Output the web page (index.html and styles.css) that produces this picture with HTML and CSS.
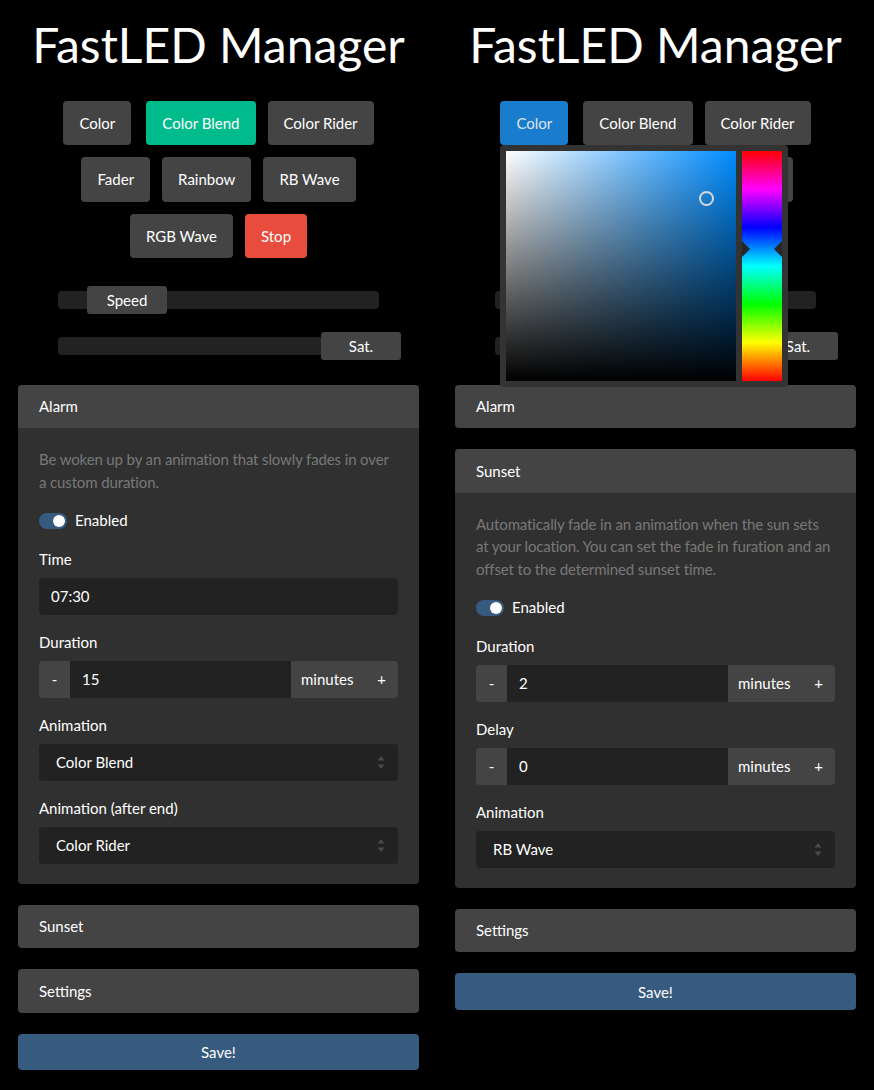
FILE: index.html
```html
<!DOCTYPE html>
<html>
<head>
<meta charset="utf-8">
<title>FastLED Manager</title>
<link rel="stylesheet" href="styles.css">
</head>
<body>
<div class="page">
  <!-- LEFT COLUMN -->
  <div class="col">
    <h1 class="title">FastLED Manager</h1>
    <div class="rows">
      <div class="row">
        <span class="btn-wrap first"><button class="btn">Color</button></span>
        <button class="btn btn-success">Color Blend</button>
        <button class="btn">Color Rider</button>
      </div>
      <div class="row">
        <button class="btn">Fader</button>
        <button class="btn">Rainbow</button>
        <button class="btn">RB Wave</button>
      </div>
      <div class="row">
        <button class="btn">RGB Wave</button>
        <button class="btn btn-danger">Stop</button>
      </div>
    </div>
    <div class="sliders">
      <div class="slider"><div class="track"></div><div class="thumb" style="left:29px">Speed</div></div>
      <div class="slider"><div class="track"></div><div class="thumb" style="left:263px">Sat.</div></div>
    </div>

    <div class="card">
      <div class="card-header">Alarm</div>
      <div class="card-body">
        <p class="muted">Be woken up by an animation that slowly fades in over a custom duration.</p>
        <div class="switch-row"><span class="switch"><span class="knob"></span></span><span>Enabled</span></div>
        <div class="group">
          <div class="label">Time</div>
          <div class="input">07:30</div>
        </div>
        <div class="group">
          <div class="label">Duration</div>
          <div class="igroup">
            <span class="ig-btn">-</span>
            <span class="ig-input">15</span>
            <span class="ig-text">minutes</span>
            <span class="ig-btn plus">+</span>
          </div>
        </div>
        <div class="group">
          <div class="label">Animation</div>
          <div class="select"><span>Color Blend</span><svg class="arrows" width="8" height="13" viewBox="0 0 8 13"><path d="M4 0 L7.5 4.5 L0.5 4.5 Z M0.5 8.5 L7.5 8.5 L4 13 Z" fill="#4a4a4a"/></svg></div>
        </div>
        <div class="group">
          <div class="label">Animation (after end)</div>
          <div class="select"><span>Color Rider</span><svg class="arrows" width="8" height="13" viewBox="0 0 8 13"><path d="M4 0 L7.5 4.5 L0.5 4.5 Z M0.5 8.5 L7.5 8.5 L4 13 Z" fill="#4a4a4a"/></svg></div>
        </div>
      </div>
    </div>
    <div class="card"><div class="card-header">Sunset</div></div>
    <div class="card"><div class="card-header">Settings</div></div>
    <button class="save">Save!</button>
  </div>

  <!-- RIGHT COLUMN -->
  <div class="col">
    <h1 class="title">FastLED Manager</h1>
    <div class="rows">
      <div class="row">
        <span class="btn-wrap first">
          <button class="btn btn-picked">Color</button>
          <div class="picker">
            <div class="sv">
              <span class="sv-dot"></span>
            </div>
            <div class="hue">
              <svg class="hue-mark" width="40" height="16" viewBox="0 0 40 16"><path d="M0 0 L8 8 L0 16 Z M40 0 L32 8 L40 16 Z" fill="#262626"/></svg>
            </div>
          </div>
        </span>
        <button class="btn">Color Blend</button>
        <button class="btn">Color Rider</button>
      </div>
      <div class="row">
        <button class="btn">Fader</button>
        <button class="btn">Rainbow</button>
        <button class="btn">RB Wave</button>
      </div>
      <div class="row">
        <button class="btn">RGB Wave</button>
        <button class="btn btn-danger">Stop</button>
      </div>
    </div>
    <div class="sliders">
      <div class="slider"><div class="track"></div><div class="thumb" style="left:29px">Speed</div></div>
      <div class="slider"><div class="track"></div><div class="thumb" style="left:263px">Sat.</div></div>
    </div>

    <div class="card"><div class="card-header">Alarm</div></div>
    <div class="card">
      <div class="card-header">Sunset</div>
      <div class="card-body">
        <p class="muted">Automatically fade in an animation when the sun sets at your location. You can set the fade in furation and an offset to the determined sunset time.</p>
        <div class="switch-row"><span class="switch"><span class="knob"></span></span><span>Enabled</span></div>
        <div class="group">
          <div class="label">Duration</div>
          <div class="igroup">
            <span class="ig-btn">-</span>
            <span class="ig-input">2</span>
            <span class="ig-text">minutes</span>
            <span class="ig-btn plus">+</span>
          </div>
        </div>
        <div class="group">
          <div class="label">Delay</div>
          <div class="igroup">
            <span class="ig-btn">-</span>
            <span class="ig-input">0</span>
            <span class="ig-text">minutes</span>
            <span class="ig-btn plus">+</span>
          </div>
        </div>
        <div class="group">
          <div class="label">Animation</div>
          <div class="select"><span>RB Wave</span><svg class="arrows" width="8" height="13" viewBox="0 0 8 13"><path d="M4 0 L7.5 4.5 L0.5 4.5 Z M0.5 8.5 L7.5 8.5 L4 13 Z" fill="#4a4a4a"/></svg></div>
        </div>
      </div>
    </div>
    <div class="card"><div class="card-header">Settings</div></div>
    <button class="save">Save!</button>
  </div>
</div>
</body>
</html>
```
FILE: styles.css
```css
html, body {
  margin: 0;
  padding: 0;
  background: #000;
}
body {
  font-family: Lato, "Open Sans", sans-serif;
  font-size: 15px;
  line-height: 22.5px;
  color: #fff;
}
.page {
  display: flex;
}
.col {
  width: 437px;
  box-sizing: border-box;
  padding: 0 18px;
  position: relative;
}
.title {
  margin: 16px 0 0;
  font-size: 48px;
  font-weight: 400;
  line-height: 1.2;
  text-align: center;
  color: #fff;
}
.rows {
  margin-top: 27.4px;
  display: flex;
  flex-direction: column;
  gap: 12px;
}
.row {
  display: flex;
  justify-content: center;
  gap: 12px;
}
.btn-wrap {
  position: relative;
  display: flex;
}
.btn-wrap.first {
  margin-right: 3px;
}
.btn {
  font-family: inherit;
  font-size: 15px;
  line-height: 22.5px;
  padding: 11px 16px;
  border: none;
  border-radius: 4px;
  background: #444;
  color: #fff;
  margin: 0;
}
.btn-success { background: #00bc8c; }
.btn-danger { background: #e74c3c; }
.btn-picked { background: #1a7ccc; color: #dfe6ee; }

.sliders {
  margin-top: 27.5px;
  display: flex;
  flex-direction: column;
  gap: 18px;
}
.slider {
  position: relative;
  height: 28px;
  width: 321px;
  margin-left: 40px;
}
.track {
  margin-top: 5.25px;
  height: 17.5px;
  border-radius: 4px;
  background: #222;
}
.thumb {
  position: absolute;
  top: 0;
  width: 80px;
  height: 28px;
  line-height: 28px;
  text-align: center;
  background: #444;
  border-radius: 3px;
  color: #fff;
}

.card {
  margin-top: 25px;
  background: #303030;
  border-radius: 4px;
  overflow: hidden;
}
.card + .card {
  margin-top: 21px;
}
.card-header {
  background: #444;
  padding: 10.5px 21px;
  line-height: 22.5px;
}
.card-body {
  padding: 20px 21px;
}
.muted {
  margin: 0 0 16px;
  color: #787878;
  letter-spacing: -0.13px;
}
.switch-row {
  display: flex;
  align-items: center;
  gap: 8px;
  margin-bottom: 16px;
}
.switch {
  width: 28px;
  height: 16px;
  border-radius: 8px;
  background: #375a7f;
  position: relative;
  display: flex;
  align-items: center;
  justify-content: flex-end;
  padding-right: 2px;
  box-sizing: border-box;
}
.knob {
  width: 12px;
  height: 12px;
  border-radius: 50%;
  background: #fff;
}
.group {
  margin-bottom: 16px;
}
.group:last-child {
  margin-bottom: 0;
}
.label {
  margin-bottom: 8px;
}
.input {
  height: 36.5px;
  box-sizing: border-box;
  padding: 7px 12px;
  background: #222;
  border-radius: 4px;
}
.igroup {
  display: flex;
  height: 36.5px;
  border-radius: 4px;
  overflow: hidden;
}
.ig-btn {
  background: #444;
  width: 31px;
  text-align: center;
  line-height: 36.5px;
}
.ig-btn.plus {
  width: 33px;
  text-align: center;
}
.ig-input {
  flex: 1;
  background: #222;
  padding: 0 12px;
  line-height: 36.5px;
}
.ig-text {
  background: #444;
  padding: 0 0 0 10px;
  width: 64px;
  line-height: 36.5px;
}
.select {
  height: 36.5px;
  box-sizing: border-box;
  padding: 7px 13px 7px 17px;
  background: #222;
  border-radius: 4px;
  display: flex;
  align-items: center;
  justify-content: space-between;
}
.arrows {
  display: block;
}
.save {
  display: block;
  width: 100%;
  margin-top: 21px;
  height: 36.5px;
  border: none;
  border-radius: 4px;
  background: #375a7f;
  color: #fff;
  font-family: inherit;
  font-size: 15px;
}

/* color picker popover */
.picker {
  position: absolute;
  top: 100%;
  left: 0;
  z-index: 10;
  display: flex;
  gap: 6px;
  padding: 6px;
  background: #333;
  border-radius: 4px;
}
.sv {
  position: relative;
  width: 230px;
  height: 230px;
  background:
    linear-gradient(to top, #000, rgba(0,0,0,0)),
    linear-gradient(to right, #fff, #008cff);
}
.sv-dot {
  position: absolute;
  left: 193px;
  top: 40px;
  width: 15px;
  height: 15px;
  box-sizing: border-box;
  border: 2px solid #d8d8d8;
  border-radius: 50%;
}
.hue {
  position: relative;
  width: 40px;
  height: 230px;
  background: linear-gradient(to bottom,
    #ff0000 0%, #ff00ff 16.67%, #0000ff 33.33%, #00ffff 50%,
    #00ff00 66.67%, #ffff00 83.33%, #ff0000 100%);
}
.hue-mark {
  position: absolute;
  left: 0;
  top: 90px;
  display: block;
}
```
